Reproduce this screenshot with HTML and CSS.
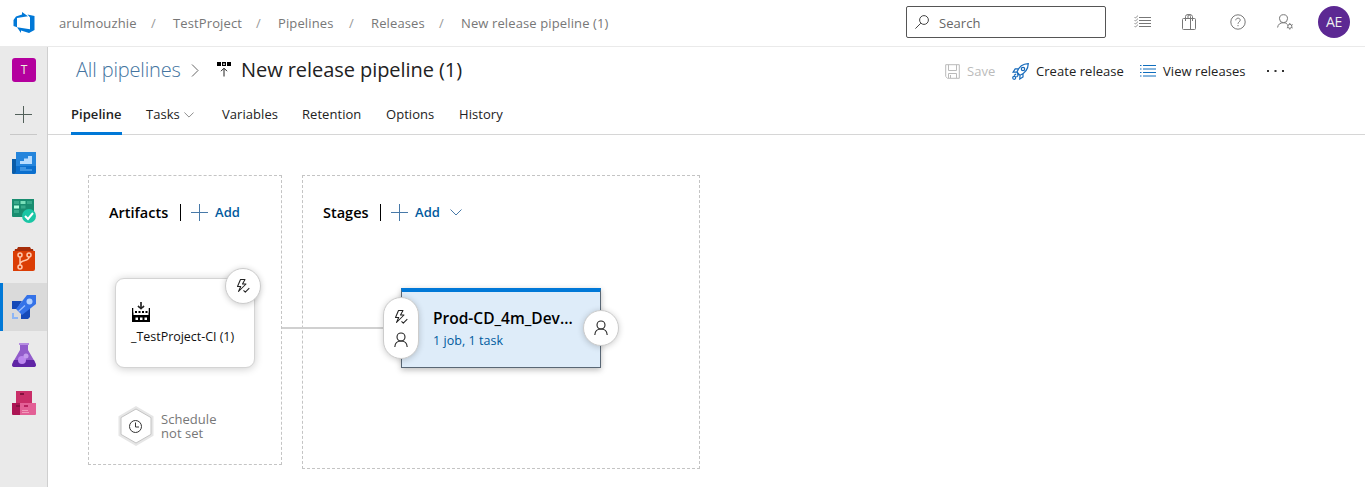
FILE: index.html
```html
<!DOCTYPE html>
<html lang="en">
<head>
<meta charset="utf-8">
<title>New release pipeline (1) - Pipelines</title>
<link rel="stylesheet" href="styles.css">
</head>
<body>
<svg class="defs" width="0" height="0">
  <symbol id="user" viewBox="0 0 14 16"><g fill="none" stroke="currentColor" stroke-width="1.1"><circle cx="7" cy="5" r="4"/><path d="M.8 15C1 11 3.500 9 7 9s6 2 6.200 6"/></g></symbol>
  <symbol id="bolt" viewBox="0 0 14 16"><g fill="none" stroke="currentColor" stroke-width="1.050" stroke-linejoin="round"><path d="M4.500 1.500H9L6.500 6H10L2.500 13.500 4.700 8.500H1.500z"/><path d="M7.500 12.300l1.800 1.900 4-4"/></g></symbol>
  <symbol id="plus" viewBox="0 0 17 17"><path d="M8.500 0v17M0 8.500h17" fill="none" stroke="currentColor"/></symbol>
  <symbol id="chevron" viewBox="0 0 12 7"><path d="M.5 .5L6 6 11.500 .5" fill="none" stroke="currentColor"/></symbol>
</svg>
<header class="topbar">
  <svg class="logo" viewBox="0 0 24 24"><path fill="#0078d7" d="M1.500 9L4 5.500 10 3.500V1l6 4.200L5 7v9.200L1.500 15zM15.500 3.500L22.500 5v14L17 22l-8-2.500V22L5 16.200l13 2V6.500z"/></svg>
  <nav class="crumbs">
    <span class="crumb-org">arulmouzhie</span><i>/</i><span class="crumb-project">TestProject</span><i>/</i><span class="crumb-area">Pipelines</span><i>/</i><span class="crumb-hub">Releases</span><i>/</i><span class="crumb-page">New release pipeline (1)</span>
  </nav>
  <div class="search">
    <svg width="14" height="14" viewBox="0 0 14 14" fill="none" stroke="#444"><circle cx="9" cy="5" r="4.400"/><path d="M5.800 8.200L.4 13.600"/></svg>
    <span>Search</span>
  </div>
  <div class="tools">
    <svg width="17" height="14" viewBox="0 0 17 14" fill="none" stroke="#777"><path d="M5 2.500h12M5 5.500h12M5 8.500h12M5 11.500h12"/><path stroke-width=".8" d="M.5 2l1 1L4 .6M.5 5l1 1L4 3.600M.5 8l1 1L4 6.600M.5 11l1 1L4 9.600"/></svg>
    <svg width="14" height="16" viewBox="0 0 14 16" fill="none" stroke="#777"><rect x=".5" y="4.500" width="13" height="11" rx="1"/><path d="M3.500 7V2.500Q3.500.5 6 .5t2.500 2V15M6 4V2Q6 .5 8 .5t2.500 2V7"/></svg>
    <svg width="16" height="16" viewBox="0 0 16 16" fill="none" stroke="#777"><circle cx="8" cy="8" r="7.200"/><path d="M5.800 6.300C5.800 3.400 10.300 3.500 10.200 6.200c0 1.500-2.200 1.800-2.200 3.600M8 11v1.200"/></svg>
    <svg width="17" height="16" viewBox="0 0 17 16" fill="none" stroke="#777"><circle cx="6.500" cy="4.700" r="4"/><path d="M.6 13.500C1 10.500 3 8.700 6.500 8.700q2 0 3.300 1"/><circle cx="12.800" cy="12.300" r="2"/><path d="M12.800 9v1.300m0 4v1.300M9.900 10.600l1.200.7m3.400 2l1.200.7m0-3.400l-1.200.7m-3.400 2l-1.200.7"/></svg>
    <div class="avatar">AE</div>
  </div>
</header>
<div class="shell">
  <aside class="rail">
    <div class="project">T</div>
    <div class="create"><svg width="17" height="17" color="#52605a"><use href="#plus"/></svg></div>
    <a class="hub"><svg viewBox="0 0 24 24"><path fill="#0a5ca8" d="M0 7h5v15H1q-1 0-1-1z"/><path fill="#2585dc" d="M4 0h20v20q0 2-2 2H2q2 0 2-2z"/><path fill="#0b6fce" d="M4 14h20v6q0 2-2 2H2q2 0 2-2z"/><path fill="#b7dcff" d="M8 12V9h4V6.500h4V4h4v8z"/><path fill="#3e94e2" d="M8 15h6v2h6v2H8z"/></svg></a>
    <a class="hub"><svg viewBox="0 0 24 24"><path fill="#198d70" d="M0 0h22v18H1q-1 0-1-1z"/><path fill="#37a98a" d="M2 2h5v3H2zM15 2h5v3h-5zM9 6.500h4.500v3H9zM2 11h5v3H2z"/><path fill="#79dfba" d="M8.500 2h5v3h-5z"/><path fill="#b4ffe0" d="M2 6.500h5v3H2z"/><circle cx="17" cy="17" r="7" fill="#19c6a5"/><path d="M13 17l3 3 5-6" fill="none" stroke="#fff" stroke-width="2"/></svg></a>
    <a class="hub"><svg viewBox="0 0 24 24"><path fill="#a62d0a" d="M6 0h12l1 2h2l1 4H2l1-4h2z"/><path fill="#db3d05" d="M1 4h22v18q0 2-2 2H1z"/><g fill="none" stroke="#ffc8ac" stroke-width="1.500"><circle cx="8" cy="8" r="2"/><circle cx="17" cy="8" r="2"/><circle cx="8" cy="20" r="2"/><path d="M8 10v8M17 10c0 5-8 2-9 7"/></g></svg></a>
    <a class="hub current"><svg viewBox="0 0 24 24"><path fill="#1549b8" d="M0 6h10L5 14H0zM18 11v11l-2 2h-7v-6z"/><path fill="#3472e8" d="M15 0h9v9L10 20l-6-6z"/><circle cx="17.500" cy="6.500" r="3" fill="#afcfff"/><path d="M6.500 16.500L13 10.500" stroke="#9bbefd" stroke-width="1.200"/><path fill="#8db6f5" d="M0 18h2v4h4v2H0z"/></svg></a>
    <a class="hub"><svg viewBox="0 0 24 24"><path fill="#925ccb" d="M8 1h8v6l7.500 13q1 4-2 4h-19q-3 0-2-4L8 7z"/><path fill="#6025a5" d="M2 17h20l2 5q0 2-3 2H3q-3 0-3-2z"/><path fill="#b68de1" d="M7 0h10v2H7z"/><circle cx="10" cy="17" r="4" fill="#bb86ef"/><circle cx="14" cy="13" r="2.500" fill="#c39bed"/></svg></a>
    <a class="hub"><svg viewBox="0 0 24 24"><path fill="#c92e68" d="M4 0h16v12H4z"/><path fill="#ac1554" d="M0 12h9v12H1q-1 0-1-1z"/><path fill="#e36096" d="M8 12h16v11q0 1-1 1H8z"/><path fill="#85113f" d="M8 2h4v2H8zM4 14h4v2H4z"/><path fill="#b82360" d="M12 14h4v2h-4z"/><path stroke="#f19aba" d="M10 19.500h6m-6 2h7"/></svg></a>
  </aside>
  <main class="main">
    <div class="titlebar">
      <a class="all">All pipelines</a>
      <svg class="arrow" width="8" height="13" viewBox="0 0 8 13" fill="none" stroke="#666"><path d="M1 .5l6 6-6 6"/></svg>
      <svg class="release-icon" width="14" height="15" viewBox="0 0 14 15"><path d="M0 0h4v4H0zM5 0h4v4H5zM10 0h4v4h-4z"/><path fill="#fff" d="M6 1.500h2v1.300H6z"/><path d="M7 14.500v-8M4 9.200l3-3 3 3" fill="none" stroke="#222"/></svg>
      <h1>New release pipeline (1)</h1>
      <div class="actions">
        <span class="action disabled"><svg width="15" height="15" viewBox="0 0 15 15" fill="none" stroke="#bbb"><path d="M.7.700h13.600v13.600H2.500l-1.800-1.800zM3.500.7v5.800h8V.7M3.500 14V9.500h8V14M5.500 14v-3"/></svg><b class="w-save">Save</b></span>
        <span class="action create-release"><svg width="17" height="17" viewBox="0 0 17 17" fill="none" stroke="#166abb" stroke-width="1.200"><path d="M5 9Q8 .8 16.300.600 16 9 8 12.300zM6.500 5.800H3.200L1 9.200l4-.2m6 1.700v3.200L7.800 16l.2-3.700M5 10.500l1.800 1.800"/><circle cx="11" cy="6" r="1.700"/><circle cx="2.200" cy="14.800" r="1.500"/><path d="M2 12.500l2-1.500M4.500 14l1.500-1.500"/></svg><b class="w-create">Create release</b></span>
        <span class="action view-releases"><svg width="16" height="12" viewBox="0 0 16 12" stroke="#106ebe"><path d="M3 .5h13M3 4h13M3 7.500h13M3 11h13M0 .5h1.500M0 4h1.500M0 7.500h1.500M0 11h1.500"/></svg><b class="w-view">View releases</b></span>
        <svg class="more" width="18" height="4" viewBox="0 0 18 4" fill="#333"><path d="M0 1h2v2H0zM7.500 1h2v2h-2zM15 1h2v2h-2z"/></svg>
      </div>
    </div>
    <nav class="tabs">
      <span class="tab selected"><b class="w-pipeline">Pipeline</b></span>
      <span class="tab tasks"><b class="w-tasks">Tasks</b><svg width="10" height="6" color="#777"><use href="#chevron"/></svg></span>
      <span class="tab"><b class="w-variables">Variables</b></span>
      <span class="tab"><b class="w-retention">Retention</b></span>
      <span class="tab"><b class="w-options">Options</b></span>
      <span class="tab"><b class="w-history">History</b></span>
    </nav>
    <div class="canvas">
      <section class="panel artifacts">
        <header><h2>Artifacts</h2><a class="add"><svg width="17" height="17"><use href="#plus"/></svg><b>Add</b></a></header>
      </section>
      <section class="panel stages">
        <header><h2>Stages</h2><a class="add"><svg width="17" height="17"><use href="#plus"/></svg><b>Add</b><svg width="12" height="7"><use href="#chevron"/></svg></a></header>
      </section>
      <div class="link"></div>
      <article class="node artifact">
        <svg width="18" height="20" viewBox="0 0 18 20"><path fill="none" stroke="#222" stroke-width="1.200" d="M9 0v7M6 4l3 3 3-3"/><path d="M0 6h1.500v7h15V6H18v14H0z"/><path fill="#fff" d="M1.500 6h15v4.500h-15z"/><path fill="none" stroke="#222" stroke-width="1.200" d="M9 0v7M6 4l3 3 3-3"/><path d="M3 9h2v2H3zM6.500 9h2v2h-2zM10 9h2v2h-2zM13.500 9h2v2h-2z"/><path fill="#fff" d="M2.500 11.500h13v1h-13zM3.500 15.500H6V18H3.500zM8 15.500h2.500V18H8zM12.500 15.500H15V18h-2.500z"/></svg>
        <span>_TestProject-CI (1)</span>
      </article>
      <div class="badge trigger"><svg width="14" height="16"><use href="#bolt"/></svg></div>
      <article class="node stage"><h3>Prod-CD_4m_Dev...</h3><a>1 job, 1 task</a></article>
      <div class="badge pre"><svg width="14" height="16"><use href="#bolt"/></svg><svg width="14" height="16"><use href="#user"/></svg></div>
      <div class="badge post"><svg width="14" height="16"><use href="#user"/></svg></div>
      <div class="schedule">
        <svg width="36" height="40" viewBox="0 0 36 40"><path d="M18 1.800L34 11v18L18 38.200 2 29V11z" fill="#fff" stroke="#e6e6e6" stroke-width="3"/><path d="M18 3L33 11.600v16.800L18 37 3 28.400V11.600z" fill="#fff" stroke="#c4c4c4"/><circle cx="17.500" cy="20.500" r="6" fill="none" stroke="#333"/><path d="M17.500 16.500v4.500H21" fill="none" stroke="#333"/></svg>
        <p>Schedule<br>not set</p>
      </div>
    </div>
  </main>
</div>
</body>
</html>
```
FILE: styles.css
```css
* { box-sizing: border-box; }
body { margin: 0; height: 487px; overflow: hidden; background: #fff; color: #222; font: 13px/20px "Open Sans", "Noto Sans", sans-serif; letter-spacing: .05px; }
b, h1, h2, h3, i { font-weight: 400; font-style: normal; margin: 0; }
b, span, a { white-space: nowrap; }
svg { display: block; flex: none; }
.defs { position: absolute; }

.topbar { display: flex; height: 47px; border-bottom: 1px solid #eaeaea; }
.logo { width: 24px; height: 24px; margin: 11px 0 0 12px; }
.crumbs { display: flex; width: 870px; padding: 13px 0 0 23px; color: #777; letter-spacing: .12px; }
.crumbs i { width: 37px; padding-left: 15px; color: #999; }
.crumb-org { width: 77px; }
.crumb-project { width: 68px; }
.crumb-area { width: 56px; }
.crumb-hub { width: 53px; }
.search { display: flex; width: 200px; height: 32px; margin-top: 6px; padding: 6px 8px; border: 1px solid #555; border-radius: 2px; color: #666; gap: 10px; }
.search svg { margin-top: 2px; }
.tools { display: flex; align-items: center; height: 44px; padding-left: 28px; }
.tools svg { margin-right: 31px; }
.tools svg:nth-child(2) { margin-right: 34px; }
.tools svg:nth-child(4) { margin-right: 24px; }
.avatar { width: 32px; height: 32px; border-radius: 50%; background: #5c2893; color: #eee; text-align: center; line-height: 32px; font-size: 14px; letter-spacing: -.3px; }

.shell { display: flex; height: 440px; }
.rail { width: 48px; background: #eaeaea; border-right: 1px solid #cfcfcf; }
.project { width: 24px; height: 24px; margin: 11px 0 0 12px; border-radius: 3px; background: #b4009e; color: #eed; text-align: center; line-height: 24px; font-size: 12px; }
.create { height: 53px; margin: 0 10px; padding: 24px 0 0 5px; border-bottom: 1px solid #c8c8c8; }
.hub { display: flex; align-items: center; height: 48px; padding-left: 12px; }
.hub svg { width: 24px; height: 24px; }
.create + .hub { margin-top: 4px; }
.create + .hub svg { margin-top: 2px; }
.current { background: #dadada; border-left: 3px solid #0078d7; padding-left: 9px; }

.main { flex: 1; }
.titlebar { display: flex; height: 48px; padding: 8px 0 0 28px; }
.all { width: 115px; color: #4474a0; font: 300 20px/29px "Open Sans", sans-serif; letter-spacing: -.15px; }
.arrow { margin-top: 9px; }
.release-icon { margin: 7px 0 0 18px; }
.titlebar h1 { width: 714px; padding-left: 10px; font-size: 20px; line-height: 29px; letter-spacing: -.06px; white-space: nowrap; }
.actions { display: flex; height: 32px; align-items: center; }
.action { display: flex; align-items: center; height: 32px; gap: 7px; }
.disabled { color: #bbb; }
.w-save { width: 45px; }
.w-create { width: 104px; }
.w-view { width: 103px; }
.more { margin-left: 1px; }

.tabs { display: flex; height: 40px; padding-left: 23px; gap: 24px; border-bottom: 1px solid #d6d6d6; }
.tab { display: flex; height: 40px; padding-top: 9px; }
.selected { border-bottom: 3px solid #0078d7; }
.selected b { font-weight: 600; width: 51px; }
.w-tasks { width: 38px; }
.tasks { width: 52px; }
.tasks svg { margin-top: 8px; }
.w-variables { width: 56px; }
.w-retention { width: 60px; }
.w-options { width: 49px; }

.canvas { position: relative; height: 352px; }
.panel { position: absolute; border: 1px dashed #c4c4c4; }
.artifacts { left: 40px; top: 40px; width: 194px; height: 290px; }
.stages { left: 254px; top: 40px; width: 398px; height: 294px; }
.panel header { display: flex; padding: 26px 0 0 20px; }
.panel h2 { height: 20px; padding-top: 1px; color: #000; font-size: 14.500px; font-weight: 600; letter-spacing: 0; }
.artifacts h2 { width: 71px; }
.stages h2 { width: 57px; }
.add { display: flex; border-left: 1px solid #000; height: 17px; margin-top: 2px; padding-left: 10px; color: #005a9e; line-height: 17px; gap: 8px; }
.add > svg { color: #4779a8; }
.add b { font-weight: 600; width: 26px; margin-left: -1px; margin-right: 1px; }
.add b + svg { margin-top: 5px; }
.link { position: absolute; left: 234px; top: 192px; width: 104px; height: 2px; background: #d0d0d0; }
.node, .badge { position: absolute; background: #fff; }
.artifact { left: 67px; top: 143px; width: 140px; height: 90px; padding: 23px 0 0 16px; border: 1px solid #d4d4d4; border-radius: 9px; box-shadow: 0 1px 8px #0003; color: #111; font-size: 12.500px; letter-spacing: -.03px; }
.artifact span { display: block; margin: 5px 0 0 -1px; }
.badge { display: flex; flex-direction: column; align-items: center; justify-content: center; width: 36px; height: 36px; border: 1px solid #ccc; border-radius: 18px; box-shadow: 0 1px 6px #0003; color: #222; }
.trigger { left: 177px; top: 133px; }
.stage { left: 353px; top: 153px; width: 200px; height: 80px; padding: 15px 0 0 31px; background: #deecf9; border: 1px solid #596775; border-top: 4px solid #0078d7; box-shadow: 0 2px 6px #0004; }
.stage h3 { color: #000; font-size: 15.500px; font-weight: 600; line-height: 22px; letter-spacing: 0; white-space: nowrap; }
.stage a { display: block; color: #005a9e; font-size: 12.500px; line-height: 21px; margin-top: 1px; }
.pre { left: 335px; top: 162px; height: 62px; gap: 7px; }
.post { left: 535px; top: 175px; }
.schedule { position: absolute; display: flex; left: 70px; top: 271px; gap: 7px; color: #777; line-height: 14px; }
.schedule p { margin: 6px 0 0; }
```
